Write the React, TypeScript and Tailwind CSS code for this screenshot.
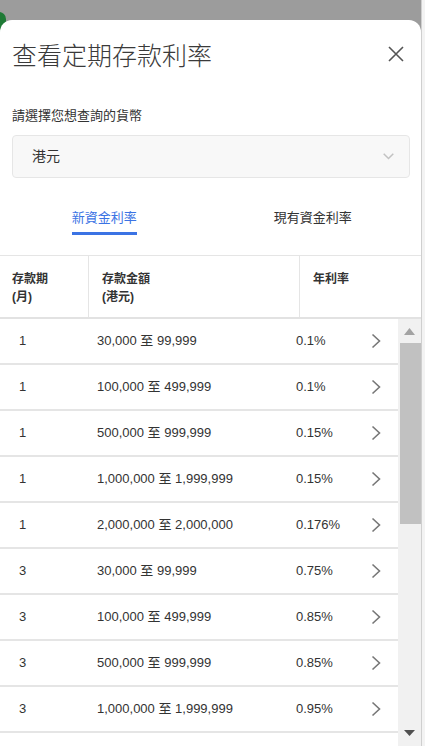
const rows = [
  { term: '1', amount: '30,000 至 99,999', rate: '0.1%' },
  { term: '1', amount: '100,000 至 499,999', rate: '0.1%' },
  { term: '1', amount: '500,000 至 999,999', rate: '0.15%' },
  { term: '1', amount: '1,000,000 至 1,999,999', rate: '0.15%' },
  { term: '1', amount: '2,000,000 至 2,000,000', rate: '0.176%' },
  { term: '3', amount: '30,000 至 99,999', rate: '0.75%' },
  { term: '3', amount: '100,000 至 499,999', rate: '0.85%' },
  { term: '3', amount: '500,000 至 999,999', rate: '0.85%' },
  { term: '3', amount: '1,000,000 至 1,999,999', rate: '0.95%' },
]

const font = "font-['Liberation_Sans','Noto_Sans_CJK_TC',sans-serif]"

function Chevron() {
  return (
    <svg width="10" height="16" viewBox="0 0 10 16" fill="none">
      <path d="M1.5 1.5 8.5 8l-7 6.5" stroke="#777" strokeWidth="1.6" />
    </svg>
  )
}

export default function App() {
  return (
    <div className={`relative flex h-[746px] w-[425px] overflow-hidden bg-[#f2f2f2] ${font} text-[#333]`}>
      <div className="flex w-[421px] flex-col bg-[#9c9c9c]">
        {/* page behind the sheet */}
        <div className="absolute left-[-8px] top-[12px] h-[20px] w-[14px] rounded-full bg-[#1f7a36]" />

        <div className="relative z-10 mt-[20px] flex flex-1 flex-col overflow-hidden rounded-t-[12px] bg-white">
          {/* Title */}
          <div className="flex items-start justify-between pl-[12px] pr-[17px] pt-[18px]">
            <h1 className="font-['Noto_Sans_CJK_TC',sans-serif] text-[25px] font-extralight leading-[32px] text-[#3a3a3a]">查看定期存款利率</h1>
            <button className="mt-[8px]">
              <svg width="16" height="16" viewBox="0 0 16 16" fill="none">
                <path d="M1 1l14 14M15 1 1 15" stroke="#555" strokeWidth="1.6" />
              </svg>
            </button>
          </div>

          {/* Currency select */}
          <div className="pl-[12px] pr-[11px]">
            <p className="mt-[37px] text-[13px] leading-[18px]">請選擇您想查詢的貨幣</p>
            <div className="mt-[10px] flex h-[43px] items-center justify-between rounded-[4px] border border-[#e6e6e6] bg-[#f8f8f8] pl-[19px] pr-[15px]">
              <span className="text-[14px]">港元</span>
              <svg width="11" height="7" viewBox="0 0 11 7" fill="none">
                <path d="M.7.7 5.5 5.5 10.3.7" stroke="#c2c2c2" strokeWidth="1.5" />
              </svg>
            </div>
          </div>

          {/* Tabs */}
          <div className="mt-[31px] grid grid-cols-2 pr-[4px]">
            <div className="flex justify-center">
              <div className="flex flex-col items-center">
                <span className="text-[13px] leading-[18px] text-[#3b73e4]">新資金利率</span>
                <span className="mt-[5px] h-[2.5px] w-full bg-[#3b73e4]" />
              </div>
            </div>
            <div className="flex justify-center">
              <span className="text-[13px] leading-[18px]">現有資金利率</span>
            </div>
          </div>

          {/* Table header */}
          <div className="mt-[20px] flex h-[64px] border-y border-t-[#e5e5e5] border-b-[2px] border-b-[#e2e2e2] text-[12px] font-bold leading-[18px]">
            <div className="w-[89px] border-r border-[#e5e5e5] pl-[12px] pt-[14px]">
              存款期
              <br />
              (月)
            </div>
            <div className="w-[211px] border-r border-[#e5e5e5] pl-[13px] pt-[14px]">
              存款金額
              <br />
              (港元)
            </div>
            <div className="flex-1 pl-[13px] pt-[14px]">年利率</div>
          </div>

          {/* Table body */}
          <div className="flex flex-1 overflow-hidden">
            <div className="w-[398px] text-[13px]">
              {rows.map((r, i) => (
                <div key={i} className="flex h-[46px] items-center border-b-[2px] border-[#e5e5e5]">
                  <span className="w-[97px] pl-[19px]">{r.term}</span>
                  <span className="w-[199px]">{r.amount}</span>
                  <span className="w-[75px]">{r.rate}</span>
                  <Chevron />
                </div>
              ))}
            </div>
            {/* scrollbar */}
            <div className="flex flex-1 flex-col bg-[#f1f1f1]">
              <div className="flex h-[24px] items-center justify-center pt-[2px]">
                <svg width="11" height="7" viewBox="0 0 11 7">
                  <path d="M5.5 0 11 7H0z" fill="#a3a3a3" />
                </svg>
              </div>
              <div className="ml-[2px] h-[181px] bg-[#c1c1c1]" />
              <div className="flex-1" />
              <div className="flex h-[16px] items-start justify-center">
                <svg width="11" height="6" viewBox="0 0 11 6">
                  <path d="M0 0h11L5.5 6z" fill="#505050" />
                </svg>
              </div>
            </div>
          </div>
        </div>
      </div>
      <div className="flex-1 border-l border-[#cfcfcf] bg-[#f3f3f3]" />
    </div>
  )
}
